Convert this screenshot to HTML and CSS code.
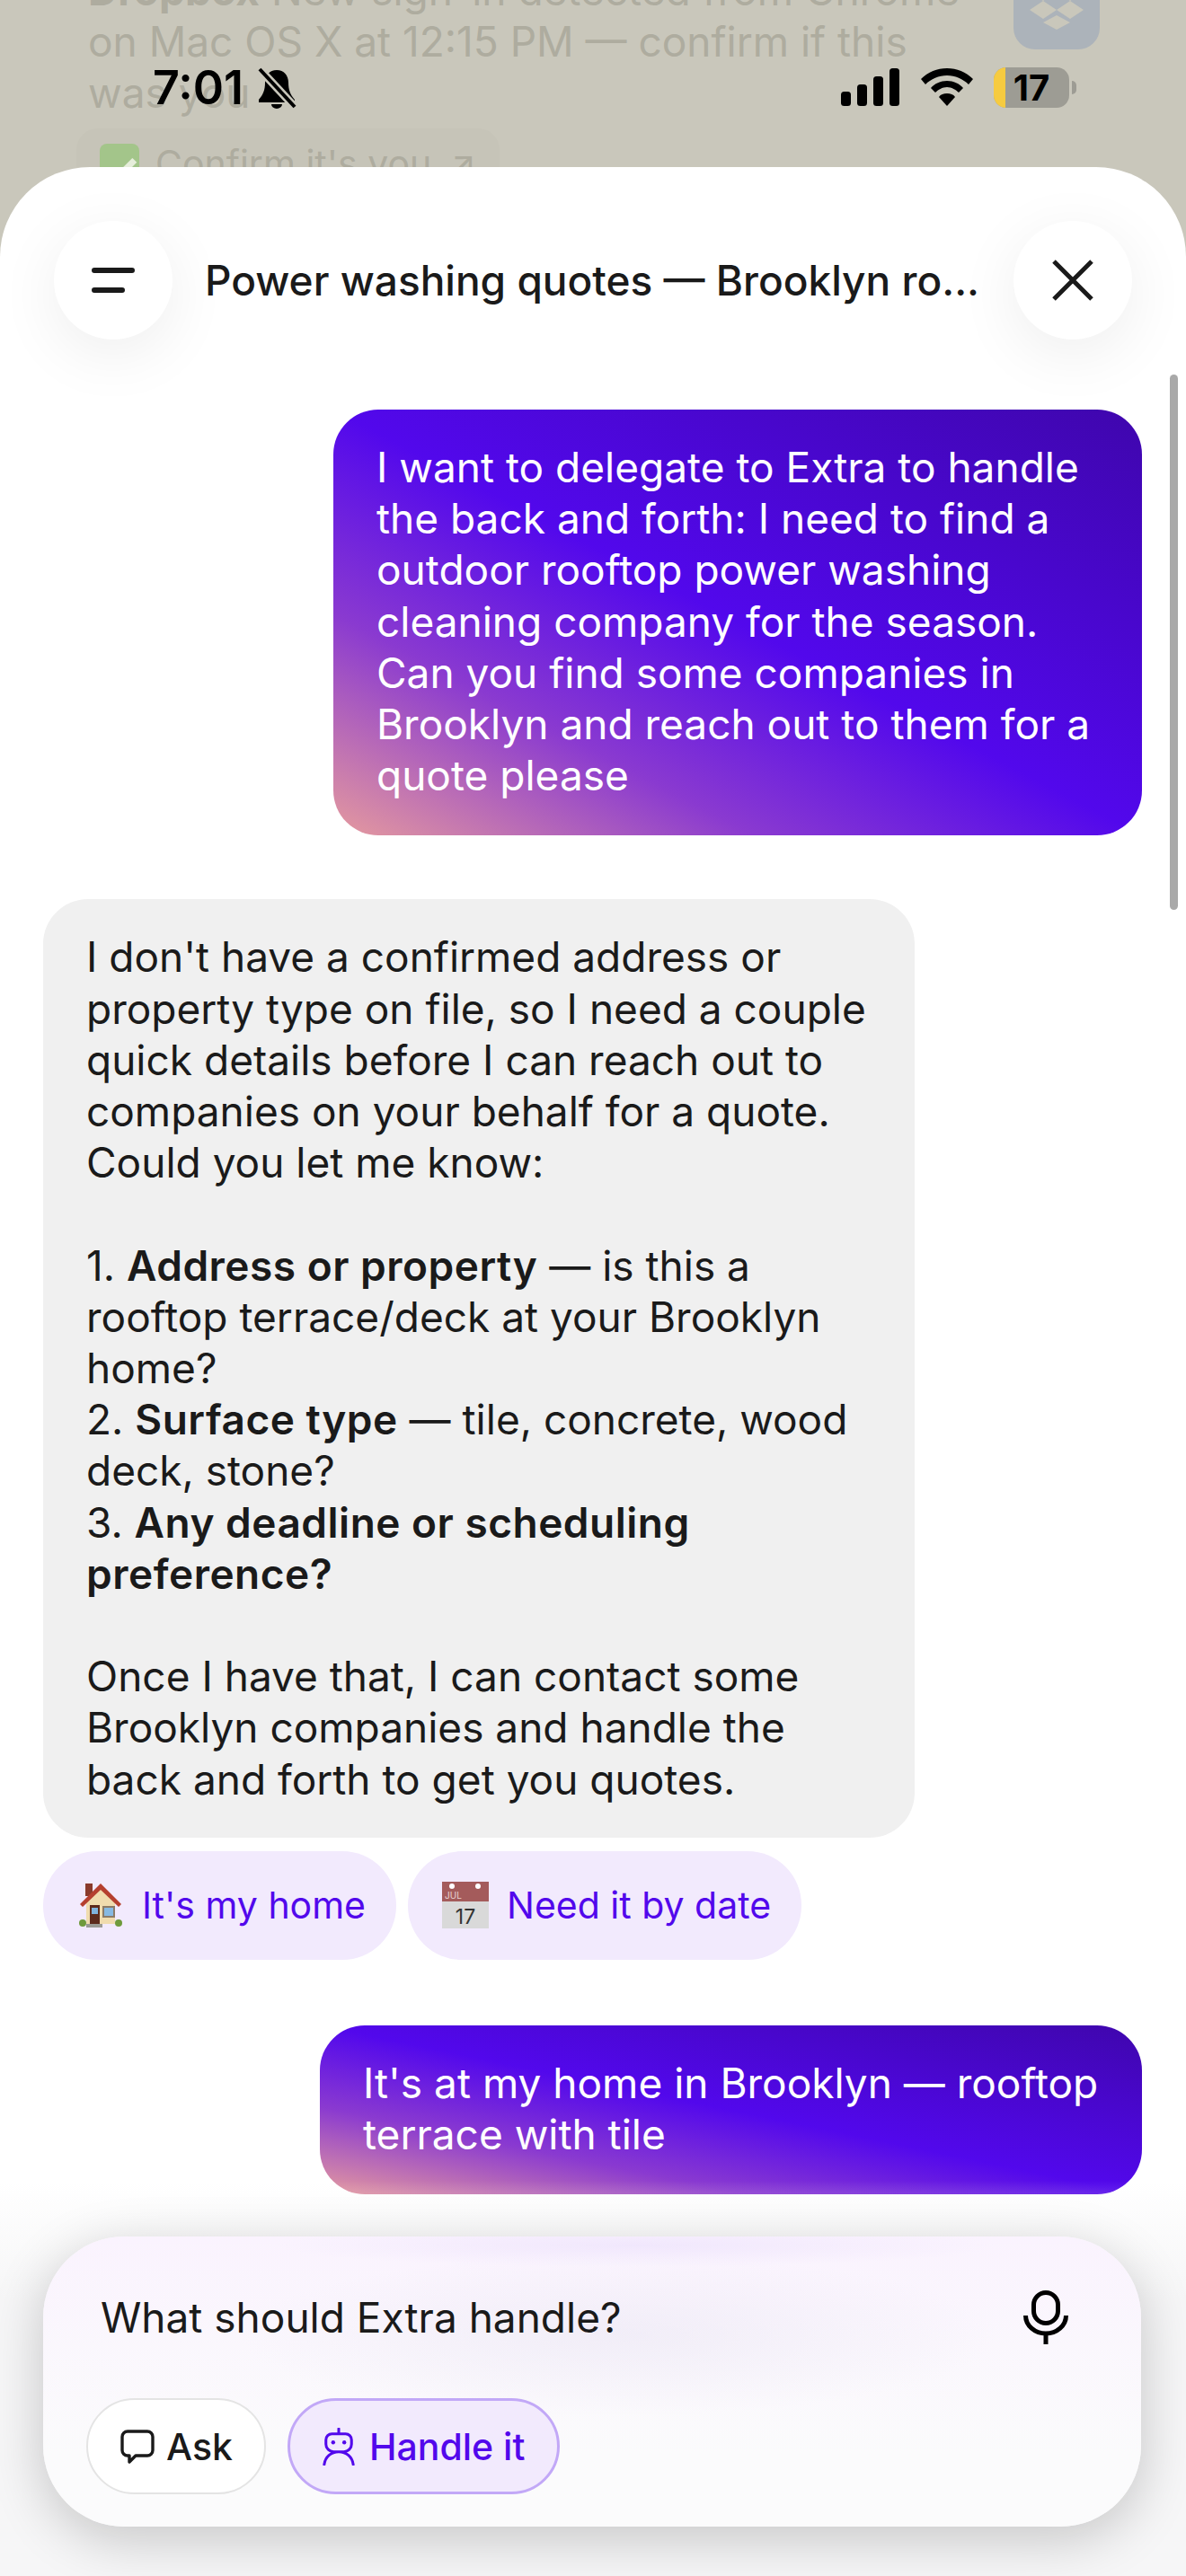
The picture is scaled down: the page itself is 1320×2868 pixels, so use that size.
FILE: index.html
```html
<!DOCTYPE html>
<html lang="en">
<head>
	<meta charset="UTF-8">
	<title>Extra</title>
	<link rel="stylesheet" href="styles.css">
</head>
<body>
	<div id="phone">
		<div id="backdrop">
			<div class="notice">
				<p><b>Dropbox</b> New sign-in detected from Chrome on Mac OS X at 12:15 PM — confirm if this was you</p>
				<div class="tile">
					<svg width="60" height="60" viewBox="0 0 60 60"><path fill="#c9c7bb" d="M15 8 30 18 15 28 0 18ZM45 8 60 18 45 28 30 18ZM15 28 30 38 15 48 0 38ZM45 28 60 38 45 48 30 38ZM30 44 45 52 30 60 15 52Z"/></svg>
				</div>
			</div>
			<div class="confirm"><span class="tick">✓</span> <span class="label">Confirm it's you</span> <span class="label">↗</span></div>
		</div>

		<div id="status">
			<div class="time">7:01
				<svg width="44" height="46" viewBox="0 0 44 46"><path d="M22 3c-8 0-13 6-13 14 0 8-2 13-7 19v3h40v-3c-5-6-7-11-7-19 0-8-5-14-13-14ZM16 41a6 5 0 0 0 12 0Z"/><path d="M3 2 42 44" stroke="#c9c7bb" stroke-width="9"/><path d="M3 2 42 44" stroke="#000" stroke-width="4"/></svg>
			</div>
			<div class="icons">
				<svg width="66" height="42" viewBox="0 0 66 42"><rect x="0" y="26" width="11" height="16" rx="3.5"/><rect x="18" y="18" width="11" height="24" rx="3.5"/><rect x="36" y="9" width="11" height="33" rx="3.5"/><rect x="54" y="0" width="11" height="42" rx="3.5"/></svg>
				<svg width="58" height="42" viewBox="0 0 58 42"><path d="M29 0C18 0 8 4 0 12l5 6c6-6 15-10 24-10s18 4 24 10l5-6C50 4 40 0 29 0Z"/><path d="M29 14c-7 0-14 3-18 8l5 5c3-3 8-6 13-6s10 3 13 6l5-5c-4-5-11-8-18-8Z"/><path d="M29 28c-4 0-7 1-9 4l9 10 9-10c-2-3-5-4-9-4Z"/></svg>
				<div class="battery"><span class="level"></span><span class="num">17</span></div>
				<span class="nub"></span>
			</div>
		</div>

		<div id="sheet">
			<div class="topbar">
				<button class="round">
					<svg width="48" height="28" viewBox="0 0 48 28"><path d="M3 3H45M3 25H34" stroke="#1a1a1a" stroke-width="6" stroke-linecap="round"/></svg>
				</button>
				<div class="title">Power washing quotes — Brooklyn ro...</div>
				<button class="round">
					<svg width="48" height="48" viewBox="0 0 48 48"><path d="M3 3 45 45M45 3 3 45" stroke="#1a1a1a" stroke-width="5"/></svg>
				</button>
			</div>

			<div class="chat">
				<div class="msg user first">I want to delegate to Extra to handle the back and forth: I need to find a outdoor rooftop power washing cleaning company for the season. Can you find some companies in Brooklyn and reach out to them for a quote please</div>

				<div class="msg bot">
					I don't have a confirmed address or property type on file, so I need a couple quick details before I can reach out to companies on your behalf for a quote. Could you let me know:<br><br>
					1. <b>Address or property</b> — is this a rooftop terrace/deck at your Brooklyn home?<br>
					2. <b>Surface type</b> — tile, concrete, wood deck, stone?<br>
					3. <b>Any deadline or scheduling preference?</b><br><br>
					Once I have that, I can contact some Brooklyn companies and handle the back and forth to get you quotes.
				</div>

				<div class="chips">
					<div class="chip">
						<span class="emoji">
							<svg width="50" height="50" viewBox="0 0 50 50">
								<rect x="8" y="1" width="8" height="14" fill="#8a3b2c"/>
								<path d="M9 22 25 6 41 22V46H9Z" fill="#f0dcae"/>
								<path d="M2 24 25 1 48 24 45 27 25 8 5 27Z" fill="#b5402f"/>
								<rect x="13" y="25" width="11" height="21" fill="#5c2a1c"/>
								<rect x="15" y="28" width="7" height="7" fill="#7fb2dc"/>
								<rect x="27" y="26" width="14" height="13" fill="#8c7b66"/>
								<rect x="29" y="28" width="10" height="9" fill="#86b9e2"/>
								<circle cx="5" cy="45" r="4" fill="#6f9a3c"/>
								<circle cx="45" cy="45" r="4" fill="#6f9a3c"/>
								<rect x="9" y="46" width="18" height="4" fill="#9a9a94"/>
							</svg>
						</span>
						It's my home
					</div>
					<div class="chip">
						<span class="emoji">
							<svg width="52" height="52" viewBox="0 0 52 52">
								<rect x="0" y="0" width="52" height="22" fill="#a45b5b"/>
								<rect x="0" y="22" width="52" height="30" fill="#d9d9d9"/>
								<circle cx="11" cy="5" r="3" fill="#fff"/>
								<circle cx="40" cy="5" r="3" fill="#fff"/>
								<text x="3" y="19" font-size="10" fill="#e8d4d4" font-family="Inter, sans-serif">JUL</text>
								<text x="26" y="47" font-size="23" fill="#333" text-anchor="middle" font-family="Inter, sans-serif">17</text>
							</svg>
						</span>
						Need it by date
					</div>
				</div>

				<div class="msg user second">It's at my home in Brooklyn — rooftop terrace with tile</div>
			</div>

			<div class="scrollbar"></div>
			<div class="fade"></div>

			<div class="composer">
				<div class="prompt">
					<span>What should Extra handle?</span>
					<svg width="50" height="60" viewBox="0 0 50 60"><rect x="11.500" y="2.500" width="27" height="34" rx="13.500" fill="none" stroke="#000" stroke-width="5"/><path d="M2.500 28a22.500 20 0 0 0 45 0M25 48V60" fill="none" stroke="#000" stroke-width="5"/></svg>
				</div>
				<div class="modes">
					<div class="mode">
						<svg width="40" height="40" viewBox="0 0 40 40"><path d="M9 3H31a6 6 0 0 1 6 6V24a6 6 0 0 1-6 6H18L11 37V30H9a6 6 0 0 1-6-6V9a6 6 0 0 1 6-6Z" fill="none" stroke="#1a1a1a" stroke-width="3.400" stroke-linejoin="round"/></svg>
						Ask
					</div>
					<div class="mode active">
						<svg width="38" height="42" viewBox="0 0 40 44"><path d="M20 1V7M12 7H28a7 7 0 0 1 7 7V19a9 9 0 0 1-9 9H14a9 9 0 0 1-9-9V14a7 7 0 0 1 7-7ZM3 43c1-9 8-15 17-15s16 6 17 15" fill="none" stroke="#5208ec" stroke-width="3.200" stroke-linecap="round"/><circle cx="13.500" cy="17" r="2.300" fill="#5208ec"/><circle cx="26.500" cy="17" r="2.300" fill="#5208ec"/></svg>
						Handle it
					</div>
				</div>
			</div>
		</div>
	</div>
</body>
</html>
```

FILE: styles.css
```css
* {
	box-sizing: border-box;
}
html, body {
	margin: 0;
	height: 100%;
}
body {
	font-family: Inter, "Liberation Sans", sans-serif;
	color: #1a1a1a;
}
#phone {
	position: relative;
	width: 1320px;
	height: 2868px;
	overflow: hidden;
	background: #c9c7bb;
}

/* what sits behind the sheet */
#backdrop {
	height: 186px;
	padding: 0 96px 0 98px;
	overflow: hidden;
	color: #aeac9f;
	font-size: 46px;
	line-height: 57px;
}
.notice {
	display: flex;
	justify-content: space-between;
	margin-top: -39px;
}
.notice p {
	width: 985px;
	margin: 0;
}
.notice b {
	font-weight: 700;
}
.tile {
	display: flex;
	align-items: flex-end;
	justify-content: center;
	width: 96px;
	height: 94px;
	padding-bottom: 22px;
	border-radius: 0 0 24px 24px;
	background: #acb3ba;
}
.confirm {
	display: inline-flex;
	align-items: flex-start;
	gap: 18px;
	margin: 11px 0 0 -13px;
	padding: 17px 26px;
	border-radius: 24px;
	background: #c6c4b8;
	font-size: 41px;
}
.confirm .label {
	margin-top: -6px;
}
.tick {
	width: 44px;
	height: 60px;
	border-radius: 8px;
	background: #a3c58a;
	color: #e6eedb;
	font-size: 50px;
	font-weight: 700;
	text-align: center;
}

#status {
	position: absolute;
	top: 74px;
	left: 0;
	width: 100%;
	display: flex;
	justify-content: space-between;
	padding: 0 122px 0 170px;
	color: #000;
}
.time {
	display: flex;
	align-items: center;
	gap: 15px;
	font-size: 52px;
	font-weight: 600;
	line-height: 48px;
}
.icons {
	display: flex;
	align-items: center;
	gap: 23px;
	height: 46px;
}
.battery {
	position: relative;
	width: 84px;
	height: 45px;
	overflow: hidden;
	border-radius: 14px;
	background: #9d9c94;
	text-align: center;
	font-size: 40px;
	font-weight: 700;
	line-height: 45px;
}
.level {
	position: absolute;
	top: 0;
	left: 0;
	width: 13px;
	height: 100%;
	background: #f6cb40;
}
.num {
	position: relative;
}
.nub {
	width: 5px;
	height: 15px;
	margin-left: -20px;
	border-radius: 0 5px 5px 0;
	background: #9d9c94;
}

/* the sheet */
#sheet {
	position: relative;
	height: 2682px;
	overflow: hidden;
	border-radius: 100px 100px 0 0;
	background: #fff;
}
.topbar {
	display: flex;
	align-items: center;
	height: 132px;
	margin-top: 60px;
	padding: 0 60px;
}
.round {
	display: flex;
	flex: none;
	align-items: center;
	justify-content: center;
	width: 132px;
	height: 132px;
	padding: 0;
	border: 0;
	border-radius: 50%;
	background: #fff;
	box-shadow: 0 16px 70px rgba(0, 0, 0, 0.07);
}
.title {
	flex: 1;
	padding-left: 36px;
	font-size: 46px;
	font-weight: 500;
	white-space: nowrap;
}
.chat {
	display: flex;
	flex-direction: column;
	padding: 78px 49px 0 48px;
}
.msg {
	padding: 36px 48px 38px;
	border-radius: 50px;
	font-size: 46px;
	line-height: 57.2px;
}
.user {
	align-self: flex-end;
	color: #fff;
	background: linear-gradient(to bottom left, #3f06ad 0%, #5208ec 50%, #8a3ad0 74%, #e59a9e 100%);
}
.user.first {
	width: 900px;
}
.user.second {
	width: 915px;
	margin-top: 73px;
}
.bot {
	width: 970px;
	margin-top: 71px;
	padding-bottom: 36px;
	background: #f0f0f0;
}
.bot b {
	font-weight: 600;
	letter-spacing: 0.5px;
}
.chips {
	display: flex;
	gap: 13px;
	margin-top: 15px;
}
.chip {
	display: flex;
	align-items: center;
	gap: 18px;
	height: 121px;
	padding: 0 34px 0 36px;
	border-radius: 60px;
	background: #f2eafd;
	color: #5208ec;
	font-size: 41px;
}
.emoji {
	display: flex;
	justify-content: center;
	width: 56px;
}

.scrollbar {
	position: absolute;
	top: 231px;
	right: 9px;
	width: 9px;
	height: 596px;
	border-radius: 5px;
	background: #a9a9a9;
}
.fade {
	position: absolute;
	left: 0;
	bottom: 0;
	width: 100%;
	height: 440px;
	background: linear-gradient(rgba(246, 246, 247, 0), #f6f6f7 30%);
}
.composer {
	position: absolute;
	left: 48px;
	bottom: 55px;
	width: 1222px;
	height: 323px;
	padding: 60px 81px 0 64px;
	border-radius: 90px;
	background:
		radial-gradient(ellipse 420px 90px at 640px 110px, rgba(232, 228, 242, 0.5), transparent),
		radial-gradient(ellipse 400px 24px at 660px 10px, rgba(238, 228, 252, 0.8), transparent),
		linear-gradient(#faf3fe, #fbfbfc 75%);
	box-shadow: 0 14px 60px rgba(0, 0, 0, 0.2);
}
.prompt {
	display: flex;
	align-items: center;
	justify-content: space-between;
	height: 60px;
	font-size: 46px;
}
.modes {
	display: flex;
	gap: 24px;
	margin: 60px 0 0 -16px;
}
.mode {
	display: flex;
	align-items: center;
	gap: 12px;
	height: 107px;
	padding: 0 35px;
	border: 2px solid #e4e4e4;
	border-radius: 54px;
	background: #fff;
	font-size: 41px;
	font-weight: 500;
}
.mode.active {
	gap: 15px;
	padding: 0 36px 0 35px;
	border: 3px solid #c2a8f7;
	background: #f2eafd;
	color: #5208ec;
}
```
